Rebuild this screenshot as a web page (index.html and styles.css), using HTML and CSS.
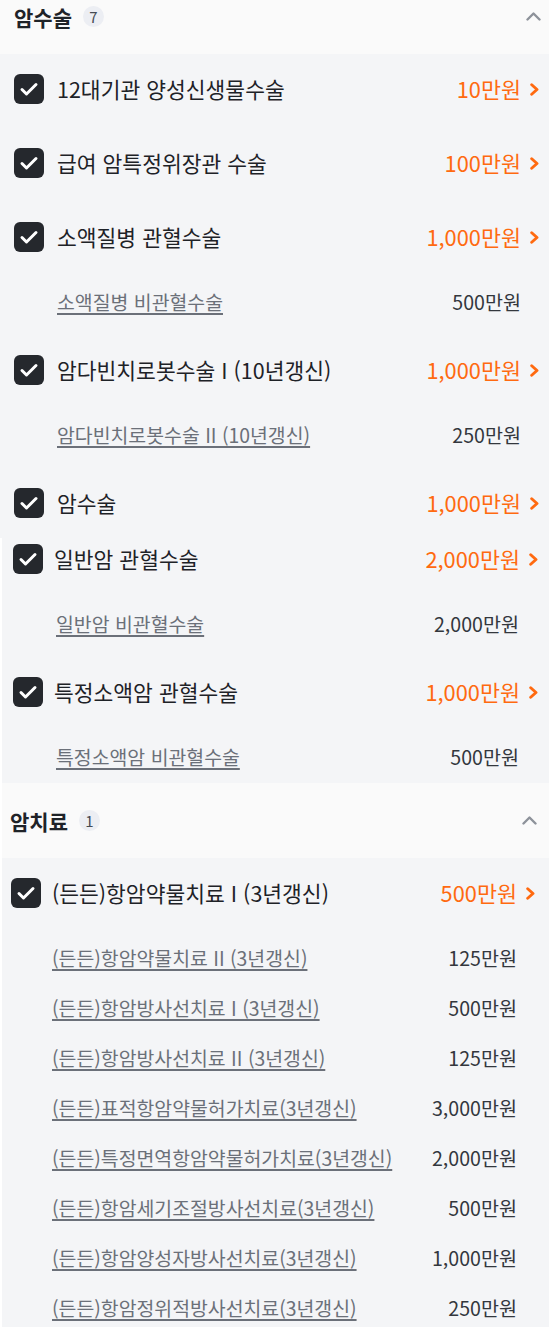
FILE: index.html
```html
<!DOCTYPE html>
<html lang="ko">
<head>
<meta charset="utf-8">
<title>보장 내역</title>
<link rel="stylesheet" href="styles.css">
</head>
<body>
<div class="page">
  <section class="sec">
    <header class="sec-head">
      <div class="sec-title">암수술 <span class="badge">7</span></div>
      <svg class="up" width="15" height="9" viewBox="0 0 15 9"><path d="M1.5 7.5L7.5 1.5L13.5 7.5"/></svg>
    </header>
    <div class="sec-body">
      <div class="group">
        <div class="row main">
          <span class="cb"><svg width="30" height="30" viewBox="0 0 30 30"><path d="M8 15.5l4.5 4.5 9.5-9.5"/></svg></span>
          <span class="label">12대기관 양성신생물수술</span>
          <span class="price">10만원</span>
          <svg class="arrow" width="9" height="13" viewBox="0 0 9 13"><path d="M1.7 1.7L7 6.5L1.7 11.3"/></svg>
        </div>
      </div>
      <div class="group">
        <div class="row main">
          <span class="cb"><svg width="30" height="30" viewBox="0 0 30 30"><path d="M8 15.5l4.5 4.5 9.5-9.5"/></svg></span>
          <span class="label">급여 암특정위장관 수술</span>
          <span class="price">100만원</span>
          <svg class="arrow" width="9" height="13" viewBox="0 0 9 13"><path d="M1.7 1.7L7 6.5L1.7 11.3"/></svg>
        </div>
      </div>
      <div class="group has-sub">
        <div class="row main">
          <span class="cb"><svg width="30" height="30" viewBox="0 0 30 30"><path d="M8 15.5l4.5 4.5 9.5-9.5"/></svg></span>
          <span class="label">소액질병 관혈수술</span>
          <span class="price">1,000만원</span>
          <svg class="arrow" width="9" height="13" viewBox="0 0 9 13"><path d="M1.7 1.7L7 6.5L1.7 11.3"/></svg>
        </div>
        <div class="row sub">
          <a class="sub-label">소액질병 비관혈수술</a>
          <span class="sub-price">500만원</span>
        </div>
      </div>
      <div class="group has-sub">
        <div class="row main">
          <span class="cb"><svg width="30" height="30" viewBox="0 0 30 30"><path d="M8 15.5l4.5 4.5 9.5-9.5"/></svg></span>
          <span class="label">암다빈치로봇수술 I (10년갱신)</span>
          <span class="price">1,000만원</span>
          <svg class="arrow" width="9" height="13" viewBox="0 0 9 13"><path d="M1.7 1.7L7 6.5L1.7 11.3"/></svg>
        </div>
        <div class="row sub">
          <a class="sub-label">암다빈치로봇수술 II (10년갱신)</a>
          <span class="sub-price">250만원</span>
        </div>
      </div>
      <div class="group group-cut">
        <div class="row main">
          <span class="cb"><svg width="30" height="30" viewBox="0 0 30 30"><path d="M8 15.5l4.5 4.5 9.5-9.5"/></svg></span>
          <span class="label">암수술</span>
          <span class="price">1,000만원</span>
          <svg class="arrow" width="9" height="13" viewBox="0 0 9 13"><path d="M1.7 1.7L7 6.5L1.7 11.3"/></svg>
        </div>
      </div>
    </div>
    <div class="sec-body part-b">
      <div class="group has-sub">
        <div class="row main">
          <span class="cb"><svg width="30" height="30" viewBox="0 0 30 30"><path d="M8 15.5l4.5 4.5 9.5-9.5"/></svg></span>
          <span class="label">일반암 관혈수술</span>
          <span class="price">2,000만원</span>
          <svg class="arrow" width="9" height="13" viewBox="0 0 9 13"><path d="M1.7 1.7L7 6.5L1.7 11.3"/></svg>
        </div>
        <div class="row sub">
          <a class="sub-label">일반암 비관혈수술</a>
          <span class="sub-price">2,000만원</span>
        </div>
      </div>
      <div class="group has-sub">
        <div class="row main">
          <span class="cb"><svg width="30" height="30" viewBox="0 0 30 30"><path d="M8 15.5l4.5 4.5 9.5-9.5"/></svg></span>
          <span class="label">특정소액암 관혈수술</span>
          <span class="price">1,000만원</span>
          <svg class="arrow" width="9" height="13" viewBox="0 0 9 13"><path d="M1.7 1.7L7 6.5L1.7 11.3"/></svg>
        </div>
        <div class="row sub">
          <a class="sub-label">특정소액암 비관혈수술</a>
          <span class="sub-price">500만원</span>
        </div>
      </div>
    </div>
  </section>

  <section class="sec sec-two">
    <header class="sec-head">
      <div class="sec-title">암치료 <span class="badge">1</span></div>
      <svg class="up" width="15" height="9" viewBox="0 0 15 9"><path d="M1.5 7.5L7.5 1.5L13.5 7.5"/></svg>
    </header>
    <div class="sec-body">
      <div class="group">
        <div class="row main">
          <span class="cb"><svg width="30" height="30" viewBox="0 0 30 30"><path d="M8 15.5l4.5 4.5 9.5-9.5"/></svg></span>
          <span class="label">(든든)항암약물치료 I (3년갱신)</span>
          <span class="price">500만원</span>
          <svg class="arrow" width="9" height="13" viewBox="0 0 9 13"><path d="M1.7 1.7L7 6.5L1.7 11.3"/></svg>
        </div>
        <div class="row sub"><a class="sub-label">(든든)항암약물치료 II (3년갱신)</a><span class="sub-price">125만원</span></div>
        <div class="row sub"><a class="sub-label">(든든)항암방사선치료 I (3년갱신)</a><span class="sub-price">500만원</span></div>
        <div class="row sub"><a class="sub-label">(든든)항암방사선치료 II (3년갱신)</a><span class="sub-price">125만원</span></div>
        <div class="row sub"><a class="sub-label">(든든)표적항암약물허가치료(3년갱신)</a><span class="sub-price">3,000만원</span></div>
        <div class="row sub"><a class="sub-label">(든든)특정면역항암약물허가치료(3년갱신)</a><span class="sub-price">2,000만원</span></div>
        <div class="row sub"><a class="sub-label">(든든)항암세기조절방사선치료(3년갱신)</a><span class="sub-price">500만원</span></div>
        <div class="row sub"><a class="sub-label">(든든)항암양성자방사선치료(3년갱신)</a><span class="sub-price">1,000만원</span></div>
        <div class="row sub"><a class="sub-label">(든든)항암정위적방사선치료(3년갱신)</a><span class="sub-price">250만원</span></div>
      </div>
    </div>
  </section>
</div>
</body>
</html>
```

FILE: styles.css
```css
html, body {
  margin: 0;
  padding: 0;
  background: #ffffff;
}

body {
  font-family: "Noto Sans CJK KR", "Noto Sans", sans-serif;
  color: #1e2227;
}

.page {
  margin-top: -21px;
}

.sec-head {
  box-sizing: border-box;
  height: 75px;
  display: flex;
  align-items: center;
  justify-content: space-between;
  padding: 0 8px 0 14px;
  background: #fafafa;
}

.sec-title {
  display: flex;
  align-items: center;
  font-size: 21px;
  font-weight: 700;
  color: #1f2328;
  line-height: 30px;
}

.badge {
  display: inline-flex;
  align-items: center;
  justify-content: center;
  width: 21px;
  height: 21px;
  margin-left: 11px;
  border-radius: 50%;
  background: #eceef3;
  color: #464b53;
  font-size: 15px;
  font-weight: 400;
  line-height: 1;
}

.up path {
  fill: none;
  stroke: #8d929a;
  stroke-width: 2.4;
  stroke-linecap: round;
  stroke-linejoin: round;
}

.sec-body {
  background: #f4f5f7;
}

.group.has-sub {
  padding-bottom: 9px;
}

.row {
  display: flex;
  align-items: center;
  box-sizing: border-box;
}

.main {
  height: 74px;
  padding: 20px 10px 24px 14px;
}

.cb {
  flex: none;
  width: 30px;
  height: 30px;
  border-radius: 6px;
  background: #25282d;
  display: flex;
}

.cb path {
  fill: none;
  stroke: #ffffff;
  stroke-width: 3;
  stroke-linecap: round;
  stroke-linejoin: round;
}

.label {
  flex: 1;
  margin-left: 13px;
  font-size: 21.5px;
  line-height: 30px;
  height: 30px;
  color: #1e2227;
  white-space: nowrap;
}

.price {
  font-size: 21.8px;
  line-height: 30px;
  height: 30px;
  color: #ff6a10;
  white-space: nowrap;
}

.arrow {
  flex: none;
  margin-left: 9px;
}

.arrow path {
  fill: none;
  stroke: #ff6a10;
  stroke-width: 2.9;
  stroke-linecap: round;
  stroke-linejoin: round;
}

.sub {
  height: 50px;
  justify-content: space-between;
  padding: 0 28px 0 57px;
}

.sub-label {
  font-size: 19.4px;
  line-height: 27px;
  color: #6b7079;
  text-decoration: underline;
  text-decoration-thickness: 2px;
  text-underline-offset: 3px;
  white-space: nowrap;
}

.sub-price {
  font-size: 19.6px;
  line-height: 27px;
  color: #33373d;
  white-space: nowrap;
}

/* first capture ends mid-row */
.group-cut .main {
  height: 70px;
  padding-bottom: 20px;
}

/* second capture, shifted slightly */
.part-b {
  margin-left: 2px;
}

.part-b .group:first-child .main {
  height: 60px;
  padding-top: 6px;
}

.part-b .group:last-child {
  padding-bottom: 2px;
}

.part-b .main {
  padding-left: 11px;
  padding-right: 11px;
}

.part-b .label {
  margin-left: 11px;
}

.part-b .sub {
  padding-left: 54px;
  padding-right: 30px;
}

/* third capture */
.sec-two {
  margin-left: 2px;
}

.sec-two .sec-head {
  padding: 0 12px 0 8px;
}

.sec-two .main {
  padding: 20px 14px 24px 9px;
}

.sec-two .label {
  margin-left: 11px;
}

.sec-two .sub {
  padding-left: 50px;
  padding-right: 32px;
}
```
